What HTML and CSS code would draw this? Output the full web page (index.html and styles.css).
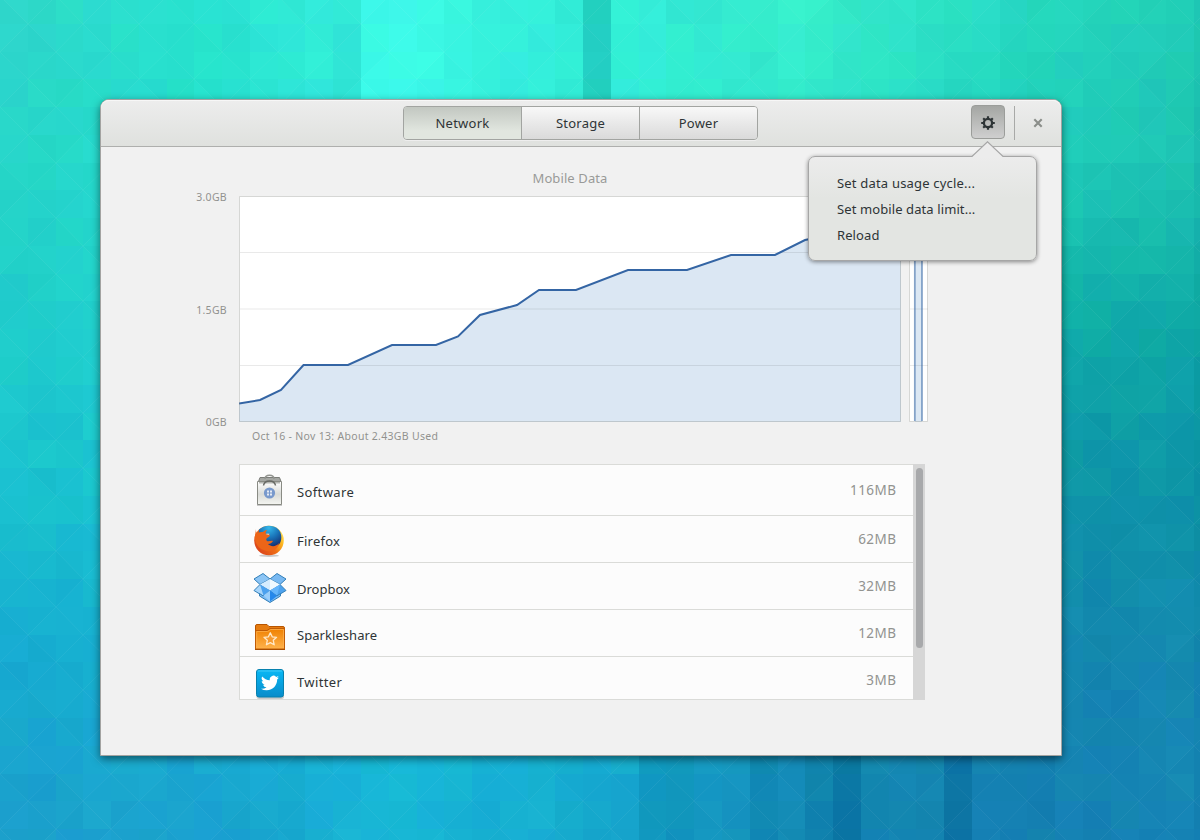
FILE: index.html
```html
<!DOCTYPE html>
<html lang="en">
<head>
<meta charset="utf-8">
<title>Usage</title>
<link rel="stylesheet" href="styles.css">
</head>
<body>
<svg class="wallpaper" id="wallpaper" width="1200" height="840" viewBox="0 0 1200 840" aria-hidden="true"></svg>
<main class="desktop">
  <section class="window">
    <header class="headerbar">
      <nav class="tabs">
        <button class="tab active">Network</button>
        <button class="tab">Storage</button>
        <button class="tab">Power</button>
      </nav>
      <div class="controls">
        <button class="gear" aria-label="Settings">
          <svg width="16" height="16" viewBox="0 0 16 16"><g stroke="#2e3436" fill="none"><circle cx="8" cy="8" r="4.100" stroke-width="2.300"/><path stroke-width="2.200" d="M8 4V1.200M8 12v2.800M4 8H1.200M12 8h2.800"/><path stroke-width="2.100" d="M5 5 3.200 3.200M11 11l1.800 1.800M5 11l-1.800 1.800M11 5l1.800-1.800"/></g></svg>
        </button>
        <span class="separator"></span>
        <button class="close" aria-label="Close">
          <svg width="10" height="10" viewBox="0 0 10 10"><path d="m1.300 1.300 7.400 7.400m0-7.400L1.300 8.700" stroke="#8b8e8a" stroke-width="2.100"/></svg>
        </button>
        <div class="popover">
          <svg class="arrow" width="34" height="17" viewBox="0 0 34 17"><path d="M1 17V15.500h1L17.500.8 33 15.500V17z" fill="#ececec"/><path d="M0 15.500h2L17.500.8 33 15.500h1" fill="none" stroke="#a6a6a6" stroke-width="1.200"/></svg>
          <div class="item cycle">Set data usage cycle...</div>
          <div class="item limit">Set mobile data limit...</div>
          <div class="item reload">Reload</div>
        </div>
      </div>
    </header>
    <div class="content">
      <h1 class="title">Mobile Data</h1>
      <div class="usage">
        <div class="axis"><span>3.0GB</span><span>1.5GB</span><span>0GB</span></div>
        <svg class="chart" width="690" height="226" viewBox="239 196 690 226">
          <path fill="#fff" d="M239 196h662v226H239zM909 196h19v226h-19z"/>
          <path d="M239 404 260 400 282 390 304 365H348L392 345H436L458 336.500 480 315 517 305 539 290H576L628 270H687L731 255H775L805 240 830 235 901 233V422H239z" fill="#dbe7f3"/>
          <path fill="#dbe7f3" d="M915 236h7v186h-7z"/>
          <path d="M240 252.500h660M240 309h660M240 365.500h660M910 309h18M910 365.500h18" stroke="#000" stroke-opacity=".085"/>
          <path d="M239 403.500 260 400 281 390 303.500 365H348L392 345H436L458 336.500 480 315 517 305 539 290H576L628 270H687L731 255H775L805 240 830 235 901 233" fill="none" stroke="#3465a4" stroke-width="2"/>
          <path d="M914.800 236V421M922 236V421" stroke="#3465a4" stroke-opacity=".6" stroke-width="1.700"/>
          <path d="M239.500 196.500h661v225h-661zM909.500 196.500h18v225h-18z" fill="none" stroke="#888a85" stroke-opacity=".34"/>
        </svg>
      </div>
      <p class="caption">Oct 16 - Nov 13: About 2.43GB Used</p>
      <div class="list">
        <div class="rows">
          <div class="row first">
            <svg class="icon" width="32" height="34" viewBox="254 474 32 34">
              <defs><linearGradient id="bag" x2="0" y2="1"><stop stop-color="#fff"/><stop offset=".55" stop-color="#d9dbd7"/><stop offset="1" stop-color="#f4f5f1"/></linearGradient></defs>
              <path d="M257 505h25" stroke="#000" stroke-opacity=".2" stroke-width="2"/>
              <path d="M260 477.500h19.500l1.500 4h-22.500z" fill="#a4a6a2" stroke="#7b7d79"/>
              <path d="M265 479c0-5 9-5 9 0" fill="none" stroke="#92948f" stroke-width="1.500"/>
              <path d="M257.500 481.500h24v23h-24z" fill="url(#bag)" stroke="#898b84"/>
              <path d="M259 482h21v1.500h-21z" fill="#b5b7b2"/>
              <path d="M263.500 485.500c1-6 11-6 12 0" fill="none" stroke="#676964" stroke-width="1.500"/>
              <circle cx="269.500" cy="493" r="5.600" fill="#7899cc"/>
              <path d="M267 490.500h2v2h-2zm3 0h2v2h-2zm-3 3h2v2h-2zm3 0h2v2h-2z" fill="#e6ebf3"/>
            </svg>
            <span class="name software">Software</span><span class="amount">116MB</span>
          </div>
          <div class="row">
            <svg class="icon firefox" width="32" height="34" viewBox="254 524 32 34">
              <defs>
                <radialGradient id="globe" cx=".45" cy=".1" r=".9"><stop stop-color="#35b8ea"/><stop offset=".5" stop-color="#1973b8"/><stop offset="1" stop-color="#12296c"/></radialGradient>
                <linearGradient id="fox" x1="1" y1=".1" x2=".1" y2=".7"><stop stop-color="#fff27a"/><stop offset=".3" stop-color="#fdb920"/><stop offset=".6" stop-color="#ee6d16"/><stop offset="1" stop-color="#dd491b"/></linearGradient>
              </defs>
              <ellipse cx="269" cy="555.700" rx="10" ry="1.300" fill="#000" opacity=".2"/>
              <circle cx="269" cy="540.500" r="14.800" fill="url(#fox)"/>
              <path d="M259 529.500c5-5 14-5 19-.5 4 4 4 10 2 14-2 4-8 6-13 4-7-3-9-12-8-17.500z" fill="url(#globe)"/>
              <path d="M256 529c0 2 0 3 1 4 2-1 4-1 6-1 1-1 2-2 4-2-1 1-2 3-1 4l4 1c0 1-1 2-3 3-1 1-1 2 0 3 2 1 4-1 6 0-1 2-3 3-5 3 3 3 8 3 11-1-1 6-6 9-12 8-8-1-13-8-12-15z" fill="#ec6518"/>
              <path d="m266.500 533.500 3 .3-.7 1.200-2.500-.4z" fill="#f8c49a"/>
            </svg>
            <span class="name firefox-name">Firefox</span><span class="amount">62MB</span>
          </div>
          <div class="row">
            <svg class="icon" width="34" height="34" viewBox="253 570 34 34">
              <g stroke="#327fb8" stroke-width="1" stroke-linejoin="round">
                <path fill="#8cc5f5" d="m263 573.500 7 5.500-10 5.500-6-5.500z"/><path fill="#79b9f2" d="m277 573.500-7 5.500 10 5.500 6-5.500z"/>
                <path fill="#a8d6fb" d="m254 590.500 6-6 10 6-7 5.500z"/><path fill="#4da2ee" d="m286 590.500-6-6-10 6 7 5.500z"/>
                <path fill="#7bbcf6" d="m259.500 593.500 3.500 2.500 7-5.500 7 5.500 3.500-2.500v2.500l-10.500 6.500-10.500-6.500z"/>
              </g>
              <path fill="#d5ecff" d="m270 579-10 5.500 10 6z"/><path fill="#f1f9ff" d="m270 579 10 5.500-10 6z"/>
              <path fill="#4ba1ef" d="m260 584.500 10 6-6.500 5z"/><path fill="#99cefb" d="m270 590.500-6.500 5 6.500 6z"/><path fill="#65b5fb" d="m280 584.500-10 6 7 5z"/><path fill="#2588eb" d="m270 590.500 7 5.500-7 5.500z"/>
            </svg>
            <span class="name">Dropbox</span><span class="amount">32MB</span>
          </div>
          <div class="row">
            <svg class="icon" width="32" height="34" viewBox="254 617 32 34">
              <defs><linearGradient id="folder" x2="0" y2="1"><stop stop-color="#ef8000"/><stop offset="1" stop-color="#ffb34c"/></linearGradient></defs>
              <path d="M255.500 648v-22q0-1.500 1.500-1.500h10l2 2h14q1.500 0 1.500 1.500v20z" fill="#e67c10" stroke="#b85500"/>
              <path d="M256 630.500h11l3-2h14.500v20.500h-29v-18z" fill="url(#folder)" stroke="#c15c05"/>
              <path d="M256.700 648v-16.500h11l3-2h12.800V648" fill="none" stroke="#ffb452" stroke-opacity=".7"/>
              <path d="M255 649.500h30" stroke="#a94e00"/>
              <path d="m270.300 632.800 1.900 4 4.400.5-3.300 3 .9 4.500-3.900-2.200-3.900 2.200.9-4.500-3.300-3 4.400-.5z" fill="#f59a32" stroke="#ffe9c9" stroke-width="1.300" stroke-linejoin="round"/>
            </svg>
            <span class="name sparkle">Sparkleshare</span><span class="amount">12MB</span>
          </div>
          <div class="row last">
            <svg class="icon" width="32" height="34" viewBox="254 666 32 34">
              <defs><linearGradient id="sky" x2="0" y2="1"><stop stop-color="#08b8f5"/><stop offset="1" stop-color="#098cca"/></linearGradient></defs>
              <rect x="256.500" y="671" width="27.500" height="28" rx="2.500" fill="#000" opacity=".2"/>
              <rect x="256.500" y="669.500" width="27" height="27.500" rx="2.500" fill="url(#sky)" stroke="#0781ae"/>
              <path d="M257.700 671h24.500" stroke="#5bd3fa" stroke-opacity=".7"/>
              <svg x="261" y="674" width="18" height="18" viewBox="0 0 24 24"><path fill="#fff" d="M24 4.600a10 10 0 0 1-2.800.8 5 5 0 0 0 2.100-2.700 10 10 0 0 1-3.100 1.200 4.900 4.900 0 0 0-8.400 4.500A14 14 0 0 1 1.700 3.200a4.900 4.900 0 0 0 1.500 6.600 5 5 0 0 1-2.200-.6 4.900 4.900 0 0 0 3.900 4.900 5 5 0 0 1-2.200.1 4.900 4.900 0 0 0 4.600 3.400A10 10 0 0 1 0 19.600a14 14 0 0 0 7.500 2.200c9.200 0 14.300-7.700 14-14.600A10 10 0 0 0 24 4.600z"/></svg>
            </svg>
            <span class="name twitter">Twitter</span><span class="amount">3MB</span>
          </div>
        </div>
        <div class="scrollbar"><div class="thumb"></div></div>
      </div>
    </div>
  </section>
</main>
<script src="wallpaper.js"></script>
</body>
</html>
```
FILE: styles.css
```css
* { box-sizing: border-box; }
body {
  margin: 0;
  width: 1200px;
  height: 840px;
  overflow: hidden;
  font-family: "Noto Sans", "Open Sans", sans-serif;
  font-size: 13px;
  color: #2e3436;
}
button { font: inherit; color: inherit; padding: 0; margin: 0; border: 0; background: none; }
svg { display: block; }
.wallpaper { position: absolute; left: 0; top: 0; z-index: -1; background: #1bc0cc; }
.desktop { padding: 99px 0 0 100px; }
.window {
  width: 962px;
  height: 657px;
  border: 1px solid #a3a3a1;
  border-radius: 9px 9px 0 0;
  background: #f1f1f1;
  box-shadow: 0 3px 9px rgba(0, 0, 0, .5);
}
.headerbar {
  height: 47px;
  display: grid;
  grid-template-columns: 302px 355px 1fr;
  border-bottom: 1px solid #aeafad;
  border-radius: 8px 8px 0 0;
  background: linear-gradient(#ededed, #dfe1de);
  box-shadow: inset 0 1px #f7f7f7;
}
.tabs {
  grid-column: 2;
  display: flex;
  margin-top: 6px;
  height: 34px;
  border: 1px solid #a2a4a1;
  border-radius: 4px;
  overflow: hidden;
  box-shadow: 0 1px #eee;
}
.tab {
  flex: 1;
  background: linear-gradient(#f8f8f8, #dadada);
  border-left: 1px solid #a2a4a1;
  letter-spacing: .25px;
}
.tab.active { border-left: 0; background: linear-gradient(#c2c7c1, #e1e6df 75%); }
.controls { position: relative; display: flex; align-items: flex-start; padding: 5px 0 0 213px; }
.gear {
  width: 34px;
  height: 34px;
  padding-top: 1px;
  display: grid;
  place-items: center;
  border: 1px solid #9b9d9a;
  border-radius: 4px;
  background: linear-gradient(#a4a6a3, #cfcfcf);
}
.separator { width: 1px; height: 34px; margin: 1px 0 0 9px; background: #a8a9a7; }
.close { margin: 13px 0 0 18px; }
.popover {
  position: absolute;
  left: 50px;
  top: 56px;
  width: 229px;
  height: 105px;
  padding: 13px 28px;
  border: 1px solid #a6a6a6;
  border-radius: 7px;
  background: linear-gradient(#ececec, #e3e5e2 40%);
  box-shadow: 0 1px 4px rgba(0, 0, 0, .45);
  z-index: 2;
}
.arrow { position: absolute; left: 161px; top: -16px; }
.item { height: 26px; line-height: 26px; letter-spacing: .1px; white-space: nowrap; }
.cycle { letter-spacing: .19px; }
.content { padding: 18px 0 0 80px; }
.title {
  width: 260px;
  margin: 0 0 0 259px;
  text-align: center;
  font-size: 13px;
  font-weight: 400;
  line-height: 26px;
  height: 31px;
  letter-spacing: .1px;
  color: #999a98;
}
.usage { display: flex; height: 226px; }
.axis {
  width: 46px;
  margin: -7px 0 -9px;
  display: flex;
  flex-direction: column;
  justify-content: space-between;
  text-align: right;
  font-size: 10.5px;
  letter-spacing: .3px;
  line-height: 17px;
  color: #91928f;
}
.chart { margin-left: 12px; }
.caption { margin: 6px 0 19px 71px; font-size: 10.5px; letter-spacing: .3px; line-height: 17px; color: #91928f; }
.list {
  display: flex;
  margin-left: 58px;
  width: 686px;
  height: 236px;
}
.rows { flex: 1; background: #fcfcfc; border: 1px solid #dadbd8; border-right: 0; overflow: hidden; }
.row { display: flex; align-items: flex-start; height: 47px; padding: 7px 17px 0 13px; border-bottom: 1px solid #dadbd8; line-height: 20px; }
.row.first { height: 51px; padding-top: 9px; }
.row.last { padding-top: 9px; border: 0; }
.icon { flex: none; width: 34px; }
.firefox { margin-top: 1px; }
.name { margin: 9px 0 0 10px; }
.amount { margin: 6px -0.4px 0 auto; color: #929390; font-size: 13.5px; letter-spacing: .45px; }
.first .name { margin-top: 8px; }
.first .amount { margin-top: 6px; }
.software, .twitter { letter-spacing: .38px; }
.name.firefox-name { margin-top: 8px; letter-spacing: .25px; }
.name.sparkle { margin-top: 8px; letter-spacing: .05px; }
.last .name { margin-top: 6px; }
.last .amount { margin-top: 4px; }
.scrollbar { width: 12px; padding: 4px 2px 0 3px; background: #d6d6d6; }
.thumb { height: 180px; border-radius: 4px; background: #a8a9ab; }
```
FILE: wallpaper.js
```js
// Triangle mosaic: colours are interpolated from a coarse palette and varied per cell.
const palette = [
  ["#30d8c8", "#28e2d0", "#3cf6e4", "#30ead6", "#38efcc", "#28dcc4", "#20ccb4"],
  ["#26d4c8", "#22dcc8", "#38f4e6", "#30ead8", "#30e8cc", "#20d0bc", "#1cbfb0"],
  ["#1fcccb", "#20d0cc", "#20d0d0", "#20c8c8", "#18c0b8", "#10b0a8", "#0da4a4"],
  ["#19bfce", "#18c0d0", "#18b8d0", "#18b0c8", "#1098b0", "#1094aa", "#0c90a6"],
  ["#16a9cf", "#16b0d2", "#17bdd9", "#15b4d2", "#1590b6", "#1485b0", "#1486b0"],
  ["#1b9ecb", "#1aa0ce", "#17b4d6", "#17a8cf", "#1388b4", "#1480b0", "#1583b5"]
].map(row => row.map(hex => [1, 3, 5].map(i => parseInt(hex.slice(i, i + 2), 16))));
const size = 27.77;
const noise = (a, b, c) => {
  const v = Math.sin(a * 127.1 + b * 311.7 + c * 74.7) * 43758.5453;
  return v - Math.floor(v) - 0.5;
};
const colourAt = (x, y) => {
  const u = Math.max(0, Math.min(5.999, x / 200));
  const v = Math.max(0, Math.min(4.999, y / 168));
  const i = Math.floor(u), j = Math.floor(v), s = u - i, t = v - j;
  return [0, 1, 2].map(k =>
    (palette[j][i][k] * (1 - s) + palette[j][i + 1][k] * s) * (1 - t) +
    (palette[j + 1][i][k] * (1 - s) + palette[j + 1][i + 1][k] * s) * t);
};
// Brightness steps of single columns, for the upper and the lower edge.
const upper = { 11: -4, 12: -12, 13: 5, 14: 5, 15: 5, 16: 3, 21: -24, 22: 3, 23: 3, 24: 2 };
const lower = { 23: -12, 24: -6, 27: -5, 29: -7, 30: -15, 34: -15 };
const fill = (col, row, part) => {
  const c = colourAt((col + 0.5) * size, (row + 0.5) * size);
  const shade = (row < 8 ? upper[col] || 0 : row > 20 ? lower[col] || 0 : 0) +
    noise(col, 0, 9) * 5 + noise(col, row, 1) * 3 + noise(col, row, part + 2) * 4;
  const hue = noise(row, col, 5) * 6;
  return `rgb(${[c[0] + shade * 0.5, c[1] + shade + hue, c[2] + shade * 0.8 - hue].map(v => Math.round(Math.max(0, Math.min(255, v)))).join()})`;
};
let shapes = "", lines = "";
for (let row = 0; row < 31; row++) {
  for (let col = 0; col < 44; col++) {
    const x = Math.round(col * size), y = Math.round(row * size - 4);
    const r = Math.round((col + 1) * size), b = Math.round((row + 1) * size - 4);
    const down = (row + col) % 2 === 0;
    shapes += `<path fill="${fill(col, row, 0)}" d="M${x} ${y}H${r}V${b}H${x}z"/>`;
    shapes += `<path fill="${fill(col, row, 1)}" d="${down ? `M${x} ${y}L${r} ${b}H${x}z` : `M${r} ${y}L${x} ${b}H${r}z`}"/>`;
    lines += down ? `M${x} ${y}L${r} ${b}` : `M${r} ${y}L${x} ${b}`;
  }
}
document.getElementById("wallpaper").innerHTML =
  shapes + `<path d="${lines}" stroke="#fff" stroke-opacity=".07" stroke-width=".8"/>`;
```
